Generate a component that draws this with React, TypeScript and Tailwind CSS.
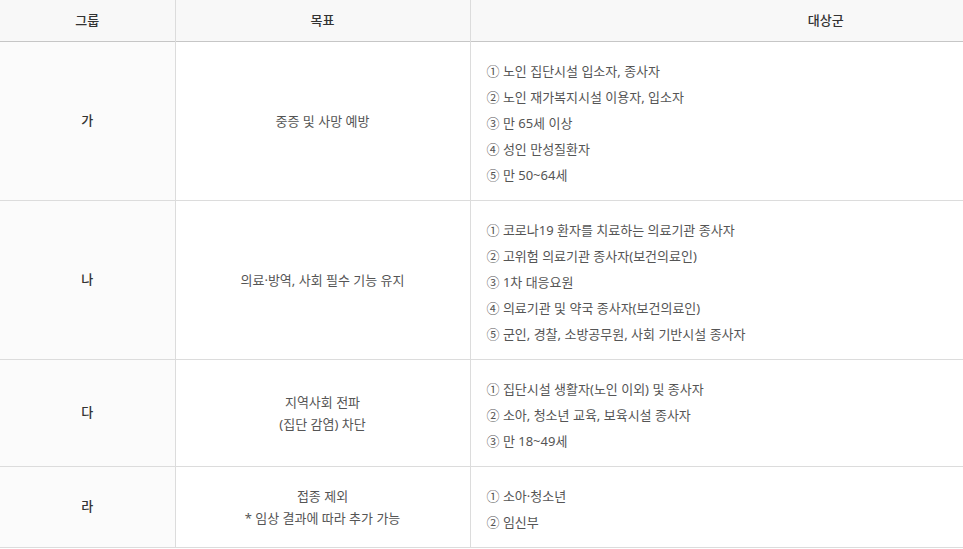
const rows = [
  {
    group: "가",
    goal: ["중증 및 사망 예방"],
    targets: [
      "① 노인 집단시설 입소자, 종사자",
      "② 노인 재가복지시설 이용자, 입소자",
      "③ 만 65세 이상",
      "④ 성인 만성질환자",
      "⑤ 만 50~64세",
    ],
  },
  {
    group: "나",
    goal: ["의료·방역, 사회 필수 기능 유지"],
    targets: [
      "① 코로나19 환자를 치료하는 의료기관 종사자",
      "② 고위험 의료기관 종사자(보건의료인)",
      "③ 1차 대응요원",
      "④ 의료기관 및 약국 종사자(보건의료인)",
      "⑤ 군인, 경찰, 소방공무원, 사회 기반시설 종사자",
    ],
  },
  {
    group: "다",
    goal: ["지역사회 전파", "(집단 감염) 차단"],
    targets: [
      "① 집단시설 생활자(노인 이외) 및 종사자",
      "② 소아, 청소년 교육, 보육시설 종사자",
      "③ 만 18~49세",
    ],
  },
  {
    group: "라",
    goal: ["접종 제외", "* 임상 결과에 따라 추가 가능"],
    targets: ["① 소아·청소년", "② 임신부"],
  },
];

export default function App() {
  return (
    <div className="w-[963px] h-[549px] overflow-hidden bg-white font-['Noto_Sans','Noto_Sans_CJK_KR',sans-serif] text-[13px]">
      <table className="w-[1181px] border-collapse table-fixed">
        <colgroup>
          <col className="w-[175px]" />
          <col className="w-[295px]" />
          <col />
        </colgroup>
        <thead>
          <tr className="h-[41px] bg-[#f8f8f8] border-b border-[#c6c6c6]">
            <th className="font-medium text-[#333] border-r border-[#dcdcdc]">그룹</th>
            <th className="font-medium text-[#333] border-r border-[#dcdcdc]">목표</th>
            <th className="font-medium text-[#333]">대상군</th>
          </tr>
        </thead>
        <tbody>
          {rows.map((r) => (
            <tr key={r.group} className="border-b border-[#dcdcdc]">
              <td className="bg-[#fbfbfb] text-center font-medium text-[#333] border-r border-[#dcdcdc]">
                {r.group}
              </td>
              <td className="text-center text-[#555] leading-[22px] border-r border-[#dcdcdc]">
                {r.goal.map((g) => (
                  <div key={g}>{g}</div>
                ))}
              </td>
              <td className="pt-[16px] pb-[12px] pl-[16px] text-[#555] leading-[26px]">
                {r.targets.map((t) => (
                  <div key={t}>{t}</div>
                ))}
              </td>
            </tr>
          ))}
        </tbody>
      </table>
    </div>
  );
}
